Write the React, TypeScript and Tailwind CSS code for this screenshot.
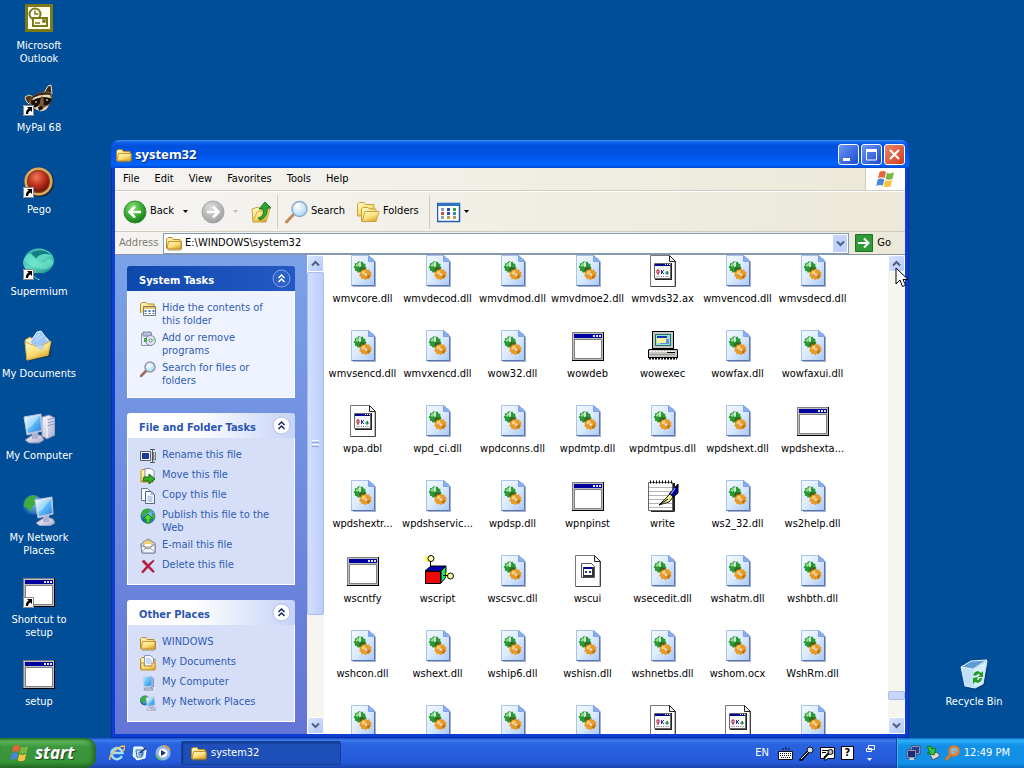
import type { ReactNode } from "react";

type IconName = "dll" | "app" | "doc" | "ui" | "pc" | "write" | "script";

const files: { name: string; icon: IconName }[] = [
  { name: "wmvcore.dll", icon: "dll" },
  { name: "wmvdecod.dll", icon: "dll" },
  { name: "wmvdmod.dll", icon: "dll" },
  { name: "wmvdmoe2.dll", icon: "dll" },
  { name: "wmvds32.ax", icon: "doc" },
  { name: "wmvencod.dll", icon: "dll" },
  { name: "wmvsdecd.dll", icon: "dll" },
  { name: "wmvsencd.dll", icon: "dll" },
  { name: "wmvxencd.dll", icon: "dll" },
  { name: "wow32.dll", icon: "dll" },
  { name: "wowdeb", icon: "app" },
  { name: "wowexec", icon: "pc" },
  { name: "wowfax.dll", icon: "dll" },
  { name: "wowfaxui.dll", icon: "dll" },
  { name: "wpa.dbl", icon: "doc" },
  { name: "wpd_ci.dll", icon: "dll" },
  { name: "wpdconns.dll", icon: "dll" },
  { name: "wpdmtp.dll", icon: "dll" },
  { name: "wpdmtpus.dll", icon: "dll" },
  { name: "wpdshext.dll", icon: "dll" },
  { name: "wpdshexta...", icon: "app" },
  { name: "wpdshextr...", icon: "dll" },
  { name: "wpdshservic...", icon: "dll" },
  { name: "wpdsp.dll", icon: "dll" },
  { name: "wpnpinst", icon: "app" },
  { name: "write", icon: "write" },
  { name: "ws2_32.dll", icon: "dll" },
  { name: "ws2help.dll", icon: "dll" },
  { name: "wscntfy", icon: "app" },
  { name: "wscript", icon: "script" },
  { name: "wscsvc.dll", icon: "dll" },
  { name: "wscui", icon: "ui" },
  { name: "wsecedit.dll", icon: "dll" },
  { name: "wshatm.dll", icon: "dll" },
  { name: "wshbth.dll", icon: "dll" },
  { name: "wshcon.dll", icon: "dll" },
  { name: "wshext.dll", icon: "dll" },
  { name: "wship6.dll", icon: "dll" },
  { name: "wshisn.dll", icon: "dll" },
  { name: "wshnetbs.dll", icon: "dll" },
  { name: "wshom.ocx", icon: "dll" },
  { name: "WshRm.dll", icon: "dll" },
  { name: "", icon: "dll" },
  { name: "", icon: "dll" },
  { name: "", icon: "dll" },
  { name: "", icon: "dll" },
  { name: "", icon: "doc" },
  { name: "", icon: "doc" },
  { name: "", icon: "dll" },
];

/* Gradients shared by all the icons */
function SharedDefs() {
  return (
    <svg width="0" height="0" className="absolute" aria-hidden="true">
      <defs>
        <linearGradient id="page" x1="0" y1="0" x2="1" y2="1">
          <stop offset="0" stopColor="#f4f9ff" />
          <stop offset="0.5" stopColor="#dcebfd" />
          <stop offset="1" stopColor="#a9c8f6" />
        </linearGradient>
        <linearGradient id="folder" x1="0" y1="0" x2="0.6" y2="1">
          <stop offset="0" stopColor="#fffbd0" />
          <stop offset="0.6" stopColor="#fbe07a" />
          <stop offset="1" stopColor="#dfab35" />
        </linearGradient>
        <linearGradient id="screen" x1="0" y1="0" x2="1" y2="1">
          <stop offset="0" stopColor="#c8f2ff" />
          <stop offset="0.5" stopColor="#5cbcf8" />
          <stop offset="1" stopColor="#2c7fe0" />
        </linearGradient>
        <linearGradient id="metal" x1="0" y1="0" x2="1" y2="1">
          <stop offset="0" stopColor="#ffffff" />
          <stop offset="1" stopColor="#a5a9cf" />
        </linearGradient>
        <radialGradient id="green" cx="0.4" cy="0.3" r="0.75">
          <stop offset="0" stopColor="#8fe07c" />
          <stop offset="0.5" stopColor="#3eb335" />
          <stop offset="1" stopColor="#137315" />
        </radialGradient>
        <radialGradient id="grey" cx="0.4" cy="0.3" r="0.75">
          <stop offset="0" stopColor="#dedede" />
          <stop offset="1" stopColor="#9c9c9c" />
        </radialGradient>
        <radialGradient id="globe" cx="0.6" cy="0.4" r="0.7">
          <stop offset="0" stopColor="#7fc6ff" />
          <stop offset="1" stopColor="#0d4fae" />
        </radialGradient>
        <radialGradient id="lens" cx="0.4" cy="0.35" r="0.7">
          <stop offset="0" stopColor="#ffffff" />
          <stop offset="1" stopColor="#a5d4f5" />
        </radialGradient>
        <radialGradient id="ruby" cx="0.4" cy="0.3" r="0.75">
          <stop offset="0" stopColor="#f07a5c" />
          <stop offset="0.5" stopColor="#c03420" />
          <stop offset="1" stopColor="#6e0d04" />
        </radialGradient>
        <linearGradient id="teal" x1="0" y1="0" x2="1" y2="1">
          <stop offset="0" stopColor="#2aa5a5" />
          <stop offset="0.5" stopColor="#5fdcc4" />
          <stop offset="1" stopColor="#12807f" />
        </linearGradient>
      </defs>
    </svg>
  );
}

function Icon({ size, children, box = size }: { size: number; box?: number; children: ReactNode }) {
  return (
    <svg width={size} height={size} viewBox={`0 0 ${box} ${box}`} className="block shrink-0" aria-hidden="true">
      {children}
    </svg>
  );
}

function DllIcon() {
  return (
    <Icon size={32}>
      <path d="M6 3h20l3 4v25H6z" fill="#6f7da6" opacity="0.6" />
      <path d="M4.500.5h17.500l5.500 5.500v24.500H4.500z" fill="url(#page)" stroke="#a9c3ea" />
      <path d="M27.500 7v23.500H4.500" fill="none" stroke="#5574b4" />
      <path d="M21.500.5l6 6h-6z" fill="#86aef5" stroke="#7fa2e6" />
      <path d="M12 6l2 1 1.500-.5 1 2 2 .5-.3 2 1.300 1.500-1.500 1.500.3 2-2.200.3-1.300 1.500-2-.8-2 .7-1-1.700-2-.3.2-2L6.500 12 8 10.500 7.800 8.500l2-.5z" fill="#279a31" />
      <path d="M8.500 10.500c1-2 3-3 5-2.500l-.5 2-3 2z" fill="#8bdc84" />
      <path d="M12 6.500l2 1v4l-2 .5z" fill="#d4e4da" />
      <path d="M14 12l5 1 1 3-4 3-4-4z" fill="#41601f" />
      <path d="M18.500 13.500l1.500 1.500 2.200-.7.5 2.200 2 .8-.9 2 1 1.900-2 .8-.5 2.200-2.200-.5-1.600 1.600-1.800-1.500-2.200.5-.4-2.200-2.100-1 1.100-1.800-1-2 2.200-.7.5-2.200 2 .5z" fill="#e79a26" />
      <path d="M14.500 17.500c1-1.500 2.500-2 4-1.500l-.5 2.500-3 1z" fill="#ffd076" />
      <path d="M20 22l3-3-.5 3.500-2 1z" fill="#b06d14" />
      <path d="M17.500 18.500h2.500v2h-2.500z" fill="#dfe3ee" />
    </Icon>
  );
}

function AppIcon({ shortcut = false }: { shortcut?: boolean }) {
  return (
    <Icon size={32}>
      <path d="M0 2h32v29H0z" fill="#000" />
      <path d="M0 2h31v28H0z" fill="#808080" />
      <path d="M1 3h30v27H1z" fill="#c0c0c0" />
      <path d="M2 4h28v4H2z" fill="#0000a0" />
      <path d="M2 9h28v20H2z" fill="#808080" />
      <path d="M3 10h26v18H3z" fill="#fff" />
      <path d="M21 5h2v2h-2zM24 5h2v2h-2zM27 5h2v2h-2z" fill="#e8e8e8" />
      {shortcut && <ShortcutArrow />}
    </Icon>
  );
}

function ShortcutArrow() {
  return (
    <g>
      <path d="M0 21h11v11H0z" fill="#fff" />
      <path d="M.5 21.500h10v10H.5z" fill="none" stroke="#888" />
      <path d="M4 23h5v5l-1.600-1.600C5.500 27.500 5 28.500 5.200 30H3c-.3-2.500.6-4 2.600-5.400z" fill="#000" />
    </g>
  );
}

function DocIcon() {
  return (
    <Icon size={32}>
      <path d="M3.500.5h18.500l6 6v25H3.500z" fill="#fff" stroke="#777" />
      <path d="M28.500 7v24.500H4" fill="none" stroke="#444" />
      <path d="M22.500.5v6h6z" fill="#eee" stroke="#222" />
      <path d="M8 8h17v17H8z" fill="#222" />
      <path d="M7.500 8.500h16v15h-16z" fill="#f8f8f8" stroke="#666" />
      <path d="M8 9h15v2H8z" fill="#00008f" />
      <path d="M18 9h1v1h-1zM20 9h1v1h-1zM22 9h1v1h-1z" fill="#fff" />
      <path d="M10 15h2v3h-2zM11 18v2" stroke="#b3123a" fill="none" />
      <path d="M14.500 15v4M17 15l-2 2 2 2" stroke="#26379c" fill="none" />
      <path d="M19 17h2v2h-2zM20.500 16v3" stroke="#168650" fill="none" />
      <path d="M9.500 21.500h3M14 21.500h3M18.500 21.500h3" stroke="#777" strokeDasharray="1 1" />
    </Icon>
  );
}

function UiIcon() {
  return (
    <Icon size={32}>
      <path d="M3.500.5h18.500l6 6v25H3.500z" fill="#fff" stroke="#777" />
      <path d="M28.500 7v24.500H4" fill="none" stroke="#444" />
      <path d="M22.500.5v6h6z" fill="#eee" stroke="#222" />
      <path d="M9.500 8.500h10l3 3v11h-13z" fill="#fff" stroke="#555" />
      <path d="M11 12h11v10H11z" fill="#333" />
      <path d="M12 13h8v7h-8z" fill="#fff" />
      <path d="M12 12h8v2h-8z" fill="#0000a0" />
      <path d="M13 16h2v2h-2zM17 16h2v2h-2z" fill="#29356f" />
    </Icon>
  );
}

function OldPcIcon() {
  return (
    <Icon size={32}>
      <path d="M5 1h22v18H5z" fill="#000" />
      <path d="M6 2h20v16H6z" fill="#c7c7c0" />
      <path d="M8 4h16v12H8z" fill="#16726d" />
      <path d="M9 5h14v10H9z" fill="#9fe0d8" />
      <path d="M10 6h10v2H10z" fill="#1636b8" />
      <path d="M10 8h10v5H10z" fill="#f4f29a" />
      <path d="M19 9h3v5h-9v-1h6z" fill="#5f8fe0" />
      <path d="M2 19h28l1 1v8H1v-8z" fill="#000" />
      <path d="M2 20h28v7H2z" fill="#c7c7c0" />
      <path d="M3 21.500h25" stroke="#fff" strokeDasharray="2 1" />
      <path d="M3 24.500h25" stroke="#999" />
      <path d="M20 22h8v1h-8z" fill="#000" />
      <path d="M2 28.500h28" stroke="#000" strokeWidth="2" strokeDasharray="2 1" />
    </Icon>
  );
}

function WriteIcon() {
  return (
    <Icon size={32}>
      <path d="M4 3h24v28l-1 1H4z" fill="#222" />
      <path d="M1.500 2.500h24v28h-24z" fill="#fff" stroke="#666" />
      <path d="M2 7.500h23M2 11.500h23M2 15.500h23M2 19.500h23M2 23.500h23M2 27.500h23" stroke="#b5b5b5" />
      <path d="M3 2h24" stroke="#000" strokeWidth="3" strokeDasharray="1 2" />
      <path d="M31 4v9l-6 5-3-4z" fill="#000092" stroke="#000" />
      <path d="M28 8l-4 6" stroke="#6785ef" strokeWidth="1.500" />
      <path d="M12 25l7-7 4-4 3 3-4 5z" fill="#eef08b" stroke="#222" />
      <path d="M12 25l9-6" stroke="#000" />
    </Icon>
  );
}

function ScriptIcon() {
  return (
    <Icon size={32}>
      <path d="M3 16l6-5h15l-5 5z" fill="#0000b0" stroke="#000" />
      <path d="M3.500 16.500h15v12h-15z" fill="#f00606" stroke="#000" />
      <path d="M19 16l5-5v11l-5 6z" fill="#23e06a" stroke="#000" />
      <path d="M3 1l5 1v5H4zM24 17l4 2-1 5-3-2z" fill="#ffff36" />
      <path d="M8.500 12V6M21 20.500h5" stroke="#000" />
      <circle cx="9" cy="3.500" r="3" fill="#ffffc0" stroke="#000" />
      <circle cx="28.500" cy="21" r="3" fill="#ffffc0" stroke="#000" />
    </Icon>
  );
}

const fileIcons: Record<IconName, ReactNode> = {
  dll: <DllIcon />,
  app: <AppIcon />,
  doc: <DocIcon />,
  ui: <UiIcon />,
  pc: <OldPcIcon />,
  write: <WriteIcon />,
  script: <ScriptIcon />,
};

function FolderIcon() {
  return (
    <Icon size={16}>
      <path d="M2 15h12.500l1-1V6" stroke="#8a6a1c" opacity="0.7" fill="none" />
      <path d="M.5 13.500V4l1.500-1.500h4L7.500 4.500h6.500v2" fill="url(#folder)" stroke="#bd8b24" />
      <path d="M1 14l1.500-7.500h12.500V13l-1 1z" fill="url(#folder)" stroke="#c3922c" />
    </Icon>
  );
}

function WindowsFlag({ size }: { size: number }) {
  return (
    <Icon size={size} box={20}>
      <path d="M3.500 3C6 1.500 8 1.700 10 3L8.500 9.300C6.500 8 4.500 8 2 9.300z" fill="#e4653a" />
      <path d="M11 3.500c2 1.300 4.300 1.300 7-.2l-1.500 6.400c-2.500 1.400-5 1.400-7 .1z" fill="#7bb843" />
      <path d="M1.700 10.500c2.500-1.400 4.500-1.300 6.600 0L6.800 16.800C5 15.500 2.600 15.600.2 17z" fill="#4a86d8" />
      <path d="M9.200 11c2.200 1.300 4.500 1.200 7-.2L14.700 17.200c-2.500 1.400-5 1.400-7 .1z" fill="#f4c340" />
    </Icon>
  );
}

/* Desktop icons */
function OutlookIcon() {
  return (
    <Icon size={32}>
      <path d="M2 2h28v28H2z" fill="#7b7a16" />
      <path d="M5 5h22v22H5z" fill="#fffff0" />
      <circle cx="12" cy="12" r="5.500" fill="#fff" stroke="#7b7a16" strokeWidth="2" />
      <path d="M12 8.500V12h3.500" fill="none" stroke="#7b7a16" strokeWidth="1.500" />
      <path d="M10 16h14v8H10z" fill="#fffff0" stroke="#7b7a16" strokeWidth="2" />
      <path d="M12 21h5M20 18h2v2h-2z" stroke="#7b7a16" strokeWidth="1.500" />
    </Icon>
  );
}

function RaccoonIcon() {
  return (
    <Icon size={32}>
      <path d="M21 9l4-7 3-1 1 9z" fill="#3a2a1a" stroke="#eadfc7" />
      <path d="M2 13l4-2 5 2-5 7-3-3z" fill="#513a24" stroke="#e0d2b4" />
      <path d="M6 18C9 10 18 6 28 8c3 7 0 15-10 18-7 1-11-3-12-8z" fill="#7d5c38" />
      <path d="M9 13c6-5 12-5 18-4l1 4c-7-2-13 0-20 4z" fill="#3a2919" />
      <path d="M10 14c5-3 11-4 17-3l1 3c-7-2-13 0-19 3z" fill="#eadbb9" />
      <path d="M8 17c7-4 14-5 21-2-1 5-5 7-9 6l-3-2-3 4c-3 1-6-1-6-6z" fill="#1b120c" />
      <path d="M17 17l2-6 2 6-1 6-3 1z" fill="#7a5a38" />
      <path d="M11 24l5-2 3 3 7-4c-2 5-6 7-10 6z" fill="#e9dcc2" />
      <path d="M15 23l4-1 1 3-4 2z" fill="#110c0a" />
      <path d="M12 18h2M23 16h2" stroke="#fff" />
      <ShortcutArrow />
    </Icon>
  );
}

function PegoIcon() {
  return (
    <Icon size={32}>
      <circle cx="17" cy="17" r="14" fill="#271208" opacity="0.6" />
      <circle cx="15.500" cy="15.500" r="14" fill="#7c4319" />
      <circle cx="15.500" cy="15.500" r="12.800" fill="none" stroke="#dfa75f" strokeWidth="2.500" />
      <circle cx="15.500" cy="15.500" r="10.500" fill="url(#ruby)" />
      <ShortcutArrow />
    </Icon>
  );
}

function SupermiumIcon() {
  return (
    <Icon size={32}>
      <path d="M0 14C2 4 10-1 20 1c8 2 12 8 11 14-2 7-8 11-15 10C6 26 0 21 0 14z" fill="url(#teal)" />
      <path d="M8 5c5-4 16-4 20 2-6-2-11-1-15 3-2-2-4-3-5-5z" fill="#137e84" />
      <path d="M1 13C2 8 6 5 8 6c2 2 4 5 6 7 3 3 8 2 10-1 3-2 6-1 6 3-2 6-10 8-16 5-5-2-8-4-13-7z" fill="#7aeed2" opacity="0.6" />
      <path d="M11 28c1 2 3 3 6 4" stroke="#4fd4d0" fill="none" />
      <ShortcutArrow />
    </Icon>
  );
}

function DocumentsIcon() {
  return (
    <Icon size={32}>
      <path d="M4 29l20-3 5-13-1 14-21 4z" fill="#332d1a" opacity="0.5" />
      <path d="M2 10l5-3 4 3 13-2 3 4-2 13-21 5z" fill="url(#folder)" stroke="#c59b42" />
      <path d="M7 12L14 2l4-1 9 12-8 12z" fill="#9fc8fa" stroke="#e9f5ff" />
      <path d="M12 8l5-4M13 11l7-5" stroke="#d5e8ff" />
      <path d="M2 12l13 5 13-6-3 14L4 30z" fill="url(#folder)" stroke="#d6ac4c" />
      <path d="M13 16l5 5 4-6z" fill="#b9d3f2" />
    </Icon>
  );
}

function Monitor() {
  return (
    <g>
      <path d="M8 24l5-2 6 2 2 4-5 3H6l-4-3z" fill="url(#metal)" stroke="#8686ac" />
      <path d="M9 20h6v7H9z" fill="#b0b1cf" />
      <path d="M1 5l17-3 1 17-15 4z" fill="url(#metal)" stroke="#b8c6e0" />
      <path d="M3 6l14-2 1 14-13 3z" fill="url(#screen)" />
      <path d="M3 6l14-2-9 11-4 2z" fill="#fff" opacity="0.35" />
    </g>
  );
}

function ComputerIcon({ size }: { size: number }) {
  return (
    <Icon size={size} box={32}>
      <path d="M19 5l7-2 6 3v17l-8 4-5-3z" fill="url(#metal)" stroke="#8587b0" />
      <path d="M24 8l7-2M24 11l7-2M24 14l7-2" stroke="#8d91bd" />
      <path d="M24 7v19" stroke="#fff" />
      <Monitor />
    </Icon>
  );
}

function NetworkIcon({ size }: { size: number }) {
  return (
    <Icon size={size} box={32}>
      <circle cx="10" cy="11" r="10" fill="url(#globe)" />
      <path d="M3 5c3-4 8-4 11-3l-3 4 3 3-5 4-1 5-4-4-3-1C1 9 2 7 3 5zM12 13l5 1v5l-4 1z" fill="#3dae3b" />
      <g transform="translate(11 1)">
        <Monitor />
      </g>
    </Icon>
  );
}

function RecycleIcon() {
  return (
    <Icon size={32}>
      <path d="M8 30l12 2 7-5 3-18z" fill="#0b2b54" opacity="0.4" />
      <path d="M3 9l12 3 14-9-4 23-8 4-10-2z" fill="#bfe0f5" stroke="#d4edff" />
      <path d="M3 9L13 3l16-1-14 9z" fill="#5d9cd4" stroke="#ecf9ff" />
      <path d="M15 12l13-8-4 22-8 3z" fill="#e8f6ff" opacity="0.6" />
      <path d="M15 17c1-4 6-5 8-2l2-2v6h-5l2-2c-1-2-3-1-4 1zM24 20c0 4-4 6-7 4l-2 2v-6l5-1-1 3c2 0 2-1 3-2z" fill="#279c27" />
    </Icon>
  );
}

const desktopIcons = [
  { label: "Microsoft Outlook", icon: <OutlookIcon /> },
  { label: "MyPal 68", icon: <RaccoonIcon /> },
  { label: "Pego", icon: <PegoIcon /> },
  { label: "Supermium", icon: <SupermiumIcon /> },
  { label: "My Documents", icon: <DocumentsIcon /> },
  { label: "My Computer", icon: <ComputerIcon size={32} /> },
  { label: "My Network Places", icon: <NetworkIcon size={32} /> },
  { label: "Shortcut to setup", icon: <AppIcon shortcut /> },
  { label: "setup", icon: <AppIcon /> },
];

function DesktopIcon({ label, icon }: { label: string; icon: ReactNode }) {
  return (
    <button className="flex h-[82px] w-[76px] flex-col items-center gap-[5px] text-center leading-[13px] text-white">
      {icon}
      <span>{label}</span>
    </button>
  );
}

/* Task pane icons, 16px */
const taskIcons = {
  hide: (
    <Icon size={16}>
      <path d="M.5 12V3l1.500-1.500h4L7.500 3H14v4" fill="url(#folder)" stroke="#b58a2a" />
      <path d="M3.500 5.500h12v9h-12z" fill="#fff" stroke="#7b7b72" />
      <path d="M4 6h11v2H4z" fill="#e3c66a" />
      <path d="M5.500 9v4M9.500 9v4M13.500 9v4" stroke="#4e72b8" strokeWidth="2" strokeDasharray="2 1" />
    </Icon>
  ),
  programs: (
    <Icon size={16}>
      <path d="M1.500 2.500h10v12h-10z" fill="#e9edf7" stroke="#8a94ac" />
      <path d="M3 1h8v4H3z" fill="#b9c3da" stroke="#7d89a5" />
      <circle cx="10.500" cy="9.500" r="5" fill="#e3e6f8" stroke="#8389a8" />
      <path d="M10.500 9.500l4-3 .5 4z" fill="#9be0ad" />
      <path d="M4 7h3v4H4z" fill="#3fae47" />
      <circle cx="10.500" cy="9.500" r="1.500" fill="#fff" stroke="#777" />
    </Icon>
  ),
  search: (
    <Icon size={16}>
      <path d="M6 10l-5 5" stroke="#9c6a5a" strokeWidth="2.500" strokeLinecap="round" />
      <circle cx="10" cy="6" r="5" fill="url(#lens)" stroke="#8a9aae" strokeWidth="1.500" />
    </Icon>
  ),
  rename: (
    <Icon size={16}>
      <path d="M.5 3.500h10v9H.5z" fill="#fff" stroke="#555c75" />
      <path d="M2 5h7v6H2z" fill="#183a9a" />
      <path d="M10 1.500h5M12.500 2v12M10 14.500h5" stroke="#555" />
      <path d="M13.500 4v8h2V4" fill="#ccc" stroke="#777" />
    </Icon>
  ),
  move: (
    <Icon size={16}>
      <path d="M1 14V3l1-1.500h4L7.500 3H13v11z" fill="url(#folder)" stroke="#b58a2a" />
      <path d="M5 .5h6l3 3V12H5z" fill="#fff" stroke="#8790a5" />
      <path d="M4 9h5V6l6 5-6 5v-3H3z" fill="#38ac27" stroke="#156a12" />
    </Icon>
  ),
  copy: (
    <Icon size={16}>
      <path d="M1.500.5h6l3 3v9h-9z" fill="#fff" stroke="#66769b" />
      <path d="M5.500 3.500h6l3 3v9h-9z" fill="#f6faff" stroke="#53658e" />
      <path d="M11.500 3.500v3h3M7.500 9h5M7.500 11h5M7.500 13h5" fill="none" stroke="#8aa3cf" />
    </Icon>
  ),
  publish: (
    <Icon size={16}>
      <circle cx="8" cy="8" r="7.500" fill="url(#globe)" />
      <path d="M3 2c3-2 6-1 8 0L9 5l-4 1-3 4-1-4zM12 5l3 1v5l-3-2z" fill="#3bab3d" />
      <path d="M8 6l5 5h-3v4H6v-4H3z" fill="#55d832" stroke="#127a15" />
    </Icon>
  ),
  email: (
    <Icon size={16}>
      <path d="M1 6l7-5 7 4v10L2 15z" fill="#d7e2f2" stroke="#7b8494" />
      <path d="M4 3h8v6H4z" fill="#fff" stroke="#c29a4a" />
      <path d="M5 4h6v2H5z" fill="#f6cd67" />
      <path d="M1 7l7 4 7-5v9L2 15z" fill="#f2f6ff" stroke="#7b8494" />
      <path d="M2 14l4-4M15 14l-5-4" stroke="#96a0b4" />
    </Icon>
  ),
  remove: (
    <Icon size={16}>
      <path d="M2 3.500L4 2l4 4.500L13.500 2l.5 1-4.500 5 5 5.500-1.500 1L8 9.500 3 15l-1.500-1L6.500 8z" fill="#c3193d" stroke="#8f0a26" strokeWidth="0.500" />
    </Icon>
  ),
  folder: <FolderIcon />,
  documents: (
    <Icon size={16}>
      <path d="M.5 14V4L2 2.500h5L8 4h7v10z" fill="url(#folder)" stroke="#b58a2a" />
      <path d="M4.500.5h6l3 3V11h-9z" fill="#f7fbff" stroke="#7d9aca" />
      <path d="M6 4h5M6 6h6M6 8h6" stroke="#9db9e5" />
      <path d="M1 15V8h3v3h8V8h3v7z" fill="url(#folder)" stroke="#c3922c" />
    </Icon>
  ),
  computer: (
    <Icon size={16}>
      <path d="M5 13h7l1 2H4z" fill="#d5d9ea" stroke="#8a8fae" />
      <path d="M11 2l3 1v9l-3 1z" fill="#8d95bd" />
      <path d="M3 2l9-1v10l-8 1z" fill="url(#screen)" stroke="#c3cfe8" />
    </Icon>
  ),
  network: <NetworkIcon size={16} />,
};

type Task = { label: string; icon: keyof typeof taskIcons };

const panels: { title: string; primary?: boolean; tasks: Task[] }[] = [
  {
    title: "System Tasks",
    primary: true,
    tasks: [
      { label: "Hide the contents of this folder", icon: "hide" },
      { label: "Add or remove programs", icon: "programs" },
      { label: "Search for files or folders", icon: "search" },
    ],
  },
  {
    title: "File and Folder Tasks",
    tasks: [
      { label: "Rename this file", icon: "rename" },
      { label: "Move this file", icon: "move" },
      { label: "Copy this file", icon: "copy" },
      { label: "Publish this file to the Web", icon: "publish" },
      { label: "E-mail this file", icon: "email" },
      { label: "Delete this file", icon: "remove" },
    ],
  },
  {
    title: "Other Places",
    tasks: [
      { label: "WINDOWS", icon: "folder" },
      { label: "My Documents", icon: "documents" },
      { label: "My Computer", icon: "computer" },
      { label: "My Network Places", icon: "network" },
    ],
  },
];

function TaskPanel({ title, primary, tasks }: { title: string; primary?: boolean; tasks: Task[] }) {
  return (
    <section>
      <header
        className={
          primary
            ? "flex h-[25px] items-center justify-between rounded-t-[3px] bg-gradient-to-r from-[#0d49ad] to-[#2558c4] pr-1 pl-3 text-white"
            : "flex h-[25px] items-center justify-between rounded-t-[3px] bg-gradient-to-r from-white from-40% to-[#c6d3f7] pr-1 pl-3 text-[#2a55b0]"
        }
      >
        <h2 className="pt-[3px] font-bold leading-[13px]">{title}</h2>
        <button aria-label={`Collapse ${title}`}>
          <Icon size={19}>
            <circle cx="9.500" cy="9.500" r="8.500" fill={primary ? "#2c62c8" : "#fff"} stroke={primary ? "#88a8e8" : "#b4bedc"} />
            <path d="M6.500 9l3-3 3 3M6.500 13l3-3 3 3" fill="none" stroke={primary ? "#fff" : "#17265e"} strokeWidth="1.500" />
          </Icon>
        </button>
      </header>
      <ul
        className={
          primary
            ? "flex flex-col gap-1 border border-t-0 border-white bg-[#eff3ff] pt-[10px] pr-4 pb-[10px] pl-3"
            : "flex flex-col gap-1 border border-t-0 border-white bg-[#d6dff7] pt-[10px] pr-4 pb-[10px] pl-3"
        }
      >
        {tasks.map((task) => (
          <li key={task.label} className="min-h-4">
            <a href="#" className="flex gap-[6px] leading-[13px] text-[#2f5cb5]">
              {taskIcons[task.icon]}
              <span>{task.label}</span>
            </a>
          </li>
        ))}
      </ul>
    </section>
  );
}

function ScrollButton({ label, down = false }: { label: string; down?: boolean }) {
  return (
    <button
      aria-label={label}
      className="flex h-[17px] shrink-0 items-center justify-center rounded-[2px] border border-white bg-gradient-to-br from-[#dbe6ff] to-[#b3c8f8]"
    >
      <Icon size={9}>
        <path d={down ? "M1 2.500l3.500 3.500L8 2.500" : "M1 6.500L4.500 3 8 6.500"} fill="none" stroke="#4d6185" strokeWidth="2" />
      </Icon>
    </button>
  );
}

function DropArrow({ faded = false }: { faded?: boolean }) {
  return (
    <svg width="5" height="3" viewBox="0 0 5 3" className="shrink-0" aria-hidden="true">
      <path d="M0 0h5L2.500 3z" fill={faded ? "#bdbab0" : "#000"} />
    </svg>
  );
}

function Toolbar() {
  return (
    <div className="flex h-[41px] shrink-0 items-center border-y border-t-white border-b-[#cfccbd] pl-2">
      <button className="flex items-center gap-[3px]">
        <Icon size={24}>
          <circle cx="12" cy="12" r="11" fill="url(#green)" stroke="#3b8a3a" />
          <path d="M18 12H7M12 6.500L6.500 12l5.500 5.500" fill="none" stroke="#fff" strokeWidth="2.500" />
        </Icon>
        Back
      </button>
      <button aria-label="Back history" className="ml-[9px]">
        <DropArrow />
      </button>
      <button aria-label="Forward" className="ml-[13px]">
        <Icon size={24}>
          <circle cx="12" cy="12" r="11" fill="url(#grey)" stroke="#a8a8a8" />
          <path d="M6 12h11M12 6.500l5.500 5.500-5.500 5.500" fill="none" stroke="#fff" strokeWidth="2.500" />
        </Icon>
      </button>
      <button aria-label="Forward history" className="ml-2">
        <DropArrow faded />
      </button>
      <button aria-label="Up" className="ml-[11px]">
        <Icon size={24}>
          <path d="M3 9l6-2 2 2h9l-3 13H4z" fill="url(#folder)" stroke="#c9a23c" />
          <path d="M4 22l4-10 13-3-3 10z" fill="url(#folder)" stroke="#d5ad44" />
          <path d="M9 18c5-1 6-5 5-9h-4l6-7 6 6h-4c1 6-2 10-7 12z" fill="#2fa332" stroke="#187a1d" />
        </Icon>
      </button>
      <div className="ml-1 h-[34px] w-px bg-[#cfccbd]" />
      <button className="ml-[6px] flex items-center gap-[3px]">
        <Icon size={24}>
          <path d="M9 15l-6.500 7" stroke="#c78a55" strokeWidth="3" strokeLinecap="round" />
          <circle cx="15.500" cy="9" r="7.500" fill="url(#lens)" stroke="#8cabd1" strokeWidth="1.500" />
          <path d="M11 7a5 5 0 0 1 5-3" fill="none" stroke="#fff" strokeWidth="2" />
        </Icon>
        Search
      </button>
      <button className="ml-[11px] flex items-center gap-[3px]">
        <Icon size={24}>
          <path d="M1.500 16V4L3 2.500h5L9.500 4.500H18V16z" fill="url(#folder)" stroke="#c9a23c" />
          <path d="M5.500 21V9L7 7.500h5L13.500 9H20v12z" fill="url(#folder)" stroke="#c9a23c" />
          <path d="M6 21.500l3-10h14l-3 10z" fill="url(#folder)" stroke="#c9a23c" />
        </Icon>
        Folders
      </button>
      <div className="ml-[10px] h-[34px] w-px bg-[#cfccbd]" />
      <button aria-label="Views" className="ml-[7px] flex items-center gap-[3px]">
        <Icon size={24}>
          <path d="M.5 3.500h22v18H.5z" fill="#fff" stroke="#1f5fae" strokeWidth="1.500" />
          <path d="M1 3h22v3H1z" fill="#2d74c8" />
          <path d="M4 8h3v3H4zM4 16h3v3H4z" fill="#8a9ed2" />
          <path d="M10 8h3v3h-3zM10 12h3v3h-3z" fill="#2b4fb5" />
          <path d="M16 8h3v3h-3z" fill="#3fa33f" />
          <path d="M4 12h3v3H4z" fill="#d24e3e" />
          <path d="M16 12h3v3h-3z" fill="#3f84c9" />
          <path d="M10 16h3v3h-3zM16 16h3v3h-3z" fill="#c09a52" />
        </Icon>
        <DropArrow />
      </button>
    </div>
  );
}

function ExplorerWindow() {
  return (
    <main className="absolute top-[140px] right-[115px] bottom-0 left-[111px] flex flex-col rounded-t-lg bg-[#0a3fd0] px-1 pb-1 shadow-[inset_0_0_0_1px_#0a2ca8]">
      {/* Title bar */}
      <header className="-mx-1 flex h-[28px] shrink-0 items-center rounded-t-lg bg-[linear-gradient(#3f8cf3_0%,#0a5fea_10%,#0050dc_22%,#0055e8_55%,#0264ff_88%,#0047cf_100%)] pt-px pr-1 pl-[5px]">
        <FolderIcon />
        <h1 className="ml-[3px] flex-1 font-['Noto_Sans'] text-[13px] font-bold text-white [text-shadow:1px_1px_#0a2f80]">system32</h1>
        <div className="flex gap-[2px]">
          <button aria-label="Minimize" className="rounded-[3px] border border-white bg-gradient-to-br from-[#6c95f4] to-[#1c49cf]">
            <Icon size={19}>
              <path d="M4 13h7v3H4z" fill="#fff" />
            </Icon>
          </button>
          <button aria-label="Maximize" className="rounded-[3px] border border-white bg-gradient-to-br from-[#6c95f4] to-[#1c49cf]">
            <Icon size={19}>
              <path d="M4.500 5h10v10h-10z" fill="none" stroke="#fff" />
              <path d="M4 4h11v3H4z" fill="#fff" />
            </Icon>
          </button>
          <button aria-label="Close" className="rounded-[3px] border border-white bg-gradient-to-br from-[#ec8468] to-[#cc3d1c]">
            <Icon size={19}>
              <path d="M5 5l9 9M14 5l-9 9" stroke="#fff" strokeWidth="2" />
            </Icon>
          </button>
        </div>
      </header>

      <div className="flex min-h-0 flex-1 flex-col bg-gradient-to-r from-[#f5f4f2] to-[#ece9d8]">
        {/* Menu bar */}
        <nav className="flex h-[23px] shrink-0 border-b border-[#cfccbd]">
          <div className="flex flex-1 items-center gap-[15px] border-r border-[#cfccbd] pl-2">
            <button>File</button>
            <button>Edit</button>
            <button>View</button>
            <button>Favorites</button>
            <button>Tools</button>
            <button>Help</button>
          </div>
          <div className="flex w-[39px] items-center justify-center bg-white">
            <WindowsFlag size={20} />
          </div>
        </nav>

        <Toolbar />

        {/* Address bar */}
        <div className="flex h-[22px] shrink-0 items-center pl-1">
          <label htmlFor="address" className="w-11 text-[#7f7c73]">Address</label>
          <div className="flex h-[21px] flex-1 items-center border border-[#7f9db9] bg-white pl-[2px]">
            <FolderIcon />
            <input id="address" defaultValue="E:\WINDOWS\system32" className="ml-[3px] min-w-0 flex-1 bg-transparent outline-none" />
            <button aria-label="Address history" className="flex h-[19px] w-4 items-center justify-center border border-white bg-[#c1d2fb]">
              <Icon size={9}>
                <path d="M1 2.500l3.500 3.500L8 2.500" fill="none" stroke="#4d6185" strokeWidth="2" />
              </Icon>
            </button>
          </div>
          <button className="mr-[14px] ml-[6px] flex items-center gap-1">
            <Icon size={18}>
              <path d="M.5 .5h17v17H.5z" fill="#2f9a38" stroke="#1c7226" />
              <path d="M3 9h10M9 4.500L13.500 9 9 13.500" fill="none" stroke="#fff" strokeWidth="2" />
            </Icon>
            Go
          </button>
        </div>

        <div className="flex min-h-0 flex-1 border-t border-[#8a94ad] bg-white">
          {/* Task pane */}
          <aside className="flex w-[209px] shrink-0">
            <div className="flex flex-1 flex-col gap-[15px] overflow-hidden bg-gradient-to-b from-[#7ba2e7] to-[#6375d6] px-3 pt-[11px]">
              {panels.map((panel) => (
                <TaskPanel key={panel.title} {...panel} />
              ))}
            </div>
            <div className="flex w-[17px] flex-col bg-[#f6f5ef]">
              <ScrollButton label="Scroll tasks up" />
              <div className="flex h-[343px] flex-col items-center justify-center gap-px rounded-[2px] border border-[#a9bdf0] bg-gradient-to-r from-[#d3deff] to-[#bccdfa]">
                <div className="h-px w-[7px] bg-white" />
                <div className="h-px w-[7px] bg-[#8faaec]" />
                <div className="h-px w-[7px] bg-white" />
                <div className="h-px w-[7px] bg-[#8faaec]" />
              </div>
              <div className="flex-1" />
              <ScrollButton label="Scroll tasks down" down />
            </div>
          </aside>

          {/* File list */}
          <div className="grid min-w-0 flex-1 auto-rows-[75px] grid-cols-[repeat(auto-fill,75px)] overflow-hidden pl-px">
            {files.map((file, index) => (
              <button key={index} aria-label={file.name || "file"} className="flex flex-col items-center gap-[5px] leading-[13px] whitespace-nowrap">
                {fileIcons[file.icon]}
                <span>{file.name}</span>
              </button>
            ))}
          </div>
          <div className="flex w-[17px] shrink-0 flex-col bg-[#f6f5ef]">
            <ScrollButton label="Scroll files up" />
            <div className="flex-1" />
            <div className="mb-[17px] h-[9px] rounded-[2px] border border-[#a9bdf0] bg-[#c8d6fb]" />
            <ScrollButton label="Scroll files down" down />
          </div>
        </div>
      </div>

      {/* Mouse pointer */}
      <svg width="13" height="21" viewBox="0 0 13 21" className="absolute top-[127px] right-px" aria-hidden="true">
        <path d="M1 1v16l4-4 2.500 6.500 3-1.200L8 12.500h5z" fill="#fff" stroke="#000" />
      </svg>
    </main>
  );
}

function Taskbar() {
  return (
    <footer className="flex h-[30px] shrink-0 bg-[linear-gradient(#1f4fc8_0%,#3b7cf0_8%,#2a63e0_20%,#245bdb_80%,#1b44ad_100%)] text-white">
      <button className="flex w-24 items-center gap-[5px] rounded-r-[10px] bg-[linear-gradient(#2b7a2b_0%,#5cb65a_10%,#3c963c_30%,#379437_80%,#256b25_100%)] pl-[10px] shadow-[inset_-3px_0_4px_#23642a]">
        <WindowsFlag size={20} />
        <span className="font-['Noto_Sans'] text-[17px] leading-5 font-bold italic [text-shadow:1px_1px_1px_#1c3f1c]">start</span>
      </button>

      {/* Quick launch */}
      <div className="ml-[13px] flex w-[72px] items-center gap-[7px]">
        <button aria-label="Internet Explorer">
          <Icon size={16}>
            <path d="M13 11a5.500 5.500 0 1 1 .5-3H4" fill="none" stroke="#9fe0ff" strokeWidth="2.500" />
            <path d="M1 15C-1 11 9 1 15 1c2 1 0 4-2 6" fill="none" stroke="#f2c34a" strokeWidth="1.500" />
          </Icon>
        </button>
        <button aria-label="Show Desktop">
          <Icon size={16}>
            <path d="M2 2h8l4 3-1 8-8 2-4-4z" fill="#d9efff" stroke="#fff" />
            <path d="M4 5h6v7H5zM7 7h4v3H7z" fill="none" stroke="#2e6fb3" />
            <path d="M8 8l6-5" stroke="#274a78" strokeWidth="2" />
          </Icon>
        </button>
        <button aria-label="Media Player">
          <Icon size={16}>
            <circle cx="8" cy="8" r="6" fill="#fff" stroke="#8db4e4" strokeWidth="3" />
            <path d="M8 .8a7 7 0 0 1 7 5" stroke="#ef9b30" strokeWidth="1.500" fill="none" />
            <path d="M1 10a7 7 0 0 0 5 5" stroke="#5bb84a" strokeWidth="1.500" fill="none" />
            <path d="M6 5l5 3-5 3z" fill="#1b3471" />
          </Icon>
        </button>
      </div>

      <div className="flex min-w-0 flex-1 items-center py-[3px]">
        <button className="flex h-full w-[160px] items-center gap-1 rounded-[2px] border border-[#173f9c] bg-[#1e4fb8] pl-[9px] shadow-[inset_1px_1px_2px_#12347f]">
          <FolderIcon />
          system32
        </button>
      </div>

      {/* Language bar */}
      <div className="flex items-center gap-[6px] pr-[14px]">
        <button className="mr-[3px]">EN</button>
        <button aria-label="Keyboard">
          <Icon size={15}>
            <path d="M5 4V2M8 4V1M11 4V2" stroke="#111" />
            <path d="M.5 5.500h14v8H.5z" fill="#fff" stroke="#111" />
            <path d="M2 7.500h11M2 9.500h11M3 11.500h9" stroke="#111" strokeDasharray="1 1" />
          </Icon>
        </button>
        <button aria-label="Microphone">
          <Icon size={15}>
            <path d="M1 15l8-9" stroke="#000" strokeWidth="3" />
            <path d="M2 13l7-7" stroke="#fff" />
            <circle cx="11" cy="4" r="3" fill="#ddd" stroke="#111" />
          </Icon>
        </button>
        <button aria-label="Speech tools">
          <Icon size={15}>
            <path d="M.5 1.500h14v11H8l-3 2v-2H.5z" fill="#fff" stroke="#000" />
            <path d="M2 4.500h6M2 6.500h4" stroke="#000" />
            <path d="M4 12l5-5" stroke="#000" strokeWidth="2" />
            <circle cx="10.500" cy="6" r="2.500" fill="#bbb" stroke="#000" />
          </Icon>
        </button>
        <button aria-label="Help" className="flex h-[14px] w-[13px] items-center justify-center border border-black bg-white font-bold leading-[12px] text-black">
          ?
        </button>
        <button aria-label="Language bar options" className="ml-[5px]">
          <Icon size={17}>
            <path d="M3.500.5h6v4h-6zM1.500 3.500h5v3h-5z" fill="#2a60d8" stroke="#fff" />
            <path d="M2 13h5l-2.500 3z" fill="#fff" />
          </Icon>
        </button>
      </div>

      {/* Tray */}
      <div className="flex items-center gap-[3px] border-l border-[#0b3f9c] bg-[linear-gradient(#0f6fcf_0%,#2fb0f5_8%,#1290e8_25%,#1190e8_85%,#0b6cc0_100%)] pr-[14px] pl-[9px] shadow-[inset_1px_0_#35b7f7]">
        <Icon size={16}>
          <path d="M5 1h9v8H5z" fill="#dcdcec" stroke="#444a70" />
          <path d="M6 2h7v6H6z" fill="#2a3f94" />
          <path d="M1 5h9v8H1z" fill="#dcdcec" stroke="#444a70" />
          <path d="M2 6h7v6H2z" fill="#1a2c78" />
          <path d="M4 13h4v2H3z" fill="#c8c8d8" />
        </Icon>
        <Icon size={16}>
          <path d="M5 10l7-3 3 4-7 4z" fill="#d8d8d8" stroke="#555" />
          <path d="M2 2l4-1 1 3 4-1-2 7-7-2 3-1z" fill="#36c63b" stroke="#15771b" />
        </Icon>
        <Icon size={16}>
          <path d="M6 10l-4 5" stroke="#e0761a" strokeWidth="3" />
          <circle cx="10" cy="6" r="4.500" fill="#7fc0ea" stroke="#e97d1c" strokeWidth="2.500" />
          <path d="M10 6l3 3" stroke="#e97d1c" strokeWidth="1.500" />
        </Icon>
        <time className="ml-px">12:49 PM</time>
      </div>
    </footer>
  );
}

export default function App() {
  return (
    <div className="flex h-screen flex-col overflow-hidden bg-[#004e98] font-['DejaVu_Sans_Condensed','Noto_Sans',sans-serif] text-[11px] text-black">
      <SharedDefs />
      <div className="relative min-h-0 flex-1">
        <div className="flex flex-col pt-[2px] pl-px">
          {desktopIcons.map((item) => (
            <DesktopIcon key={item.label} {...item} />
          ))}
        </div>
        <div className="absolute right-3 bottom-[-2px]">
          <DesktopIcon label="Recycle Bin" icon={<RecycleIcon />} />
        </div>
        <ExplorerWindow />
      </div>
      <Taskbar />
    </div>
  );
}
